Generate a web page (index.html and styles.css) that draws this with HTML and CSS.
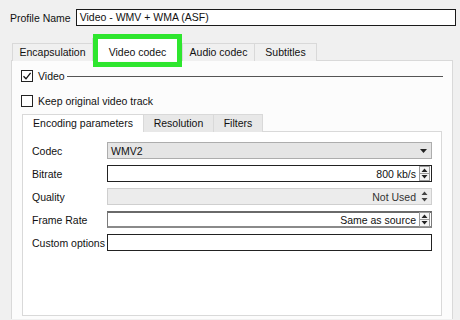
FILE: index.html
```html
<!DOCTYPE html>
<html lang="en">
<head>
    <meta charset="UTF-8">
    <meta name="viewport" content="width=device-width, initial-scale=1.0">
    <title>Video codec</title>
    <link rel="stylesheet" href="styles.css">
</head>
<body>
    <!-- Profile name -->
    <div class="profile">
        <span class="profile-label">Profile Name</span>
        <div class="profile-input">Video - WMV + WMA (ASF)</div>
    </div>

    <!-- Outer tabs -->
    <div class="tabs outer-tabs">
        <div class="tab">Encapsulation</div>
        <div class="tab active highlighted">Video codec</div>
        <div class="tab">Audio codec</div>
        <div class="tab">Subtitles</div>
    </div>

    <div class="panel">
        <div class="check-row">
            <span class="checkbox">
                <svg width="10" height="10" viewBox="0 0 10 10"><path d="M1.5 5.2 L4 7.8 L8.6 1.8" fill="none" stroke="#111" stroke-width="1.3"/></svg>
            </span>
            <span>Video</span>
            <span class="rule"></span>
        </div>
        <div class="check-row second">
            <span class="checkbox"></span>
            <span>Keep original video track</span>
        </div>

        <!-- Inner tabs -->
        <div class="tabs inner-tabs">
            <div class="tab active">Encoding parameters</div>
            <div class="tab">Resolution</div>
            <div class="tab">Filters</div>
        </div>

        <div class="inner-panel">
            <div class="form-row">
                <span class="form-label">Codec</span>
                <div class="field combo">
                    <span class="value-left">WMV2</span>
                    <svg class="arrow" width="7" height="4" viewBox="0 0 7 4"><path d="M0 0 H7 L3.5 4 Z" fill="#222"/></svg>
                </div>
            </div>
            <div class="form-row">
                <span class="form-label">Bitrate</span>
                <div class="field edit strong">
                    <span class="value-right">800 kb/s</span>
                    <span class="spin">
                        <svg width="11" height="15" viewBox="0 0 11 15"><rect x="0.5" y="0.5" width="10" height="14" fill="#f4f4f4" stroke="#9a9a9a"/><line x1="1" y1="7.5" x2="10" y2="7.5" stroke="#9a9a9a"/><path d="M2.5 6 L5.5 2.5 L8.5 6 Z M2.5 9 L5.5 12.5 L8.5 9 Z" fill="#222"/></svg>
                    </span>
                </div>
            </div>
            <div class="form-row">
                <span class="form-label">Quality</span>
                <div class="field disabled">
                    <span class="value-right">Not Used</span>
                    <span class="spin">
                        <svg width="11" height="15" viewBox="0 0 11 15"><path d="M2.5 6 L5.5 2.5 L8.5 6 Z M2.5 9 L5.5 12.5 L8.5 9 Z" fill="#444"/></svg>
                    </span>
                </div>
            </div>
            <div class="form-row">
                <span class="form-label">Frame Rate</span>
                <div class="field edit framed">
                    <span class="value-right">Same as source</span>
                    <span class="spin">
                        <svg width="11" height="15" viewBox="0 0 11 15"><rect x="0.5" y="0.5" width="10" height="14" fill="#f4f4f4" stroke="#9a9a9a"/><line x1="1" y1="7.5" x2="10" y2="7.5" stroke="#9a9a9a"/><path d="M2.5 6 L5.5 2.5 L8.5 6 Z M2.5 9 L5.5 12.5 L8.5 9 Z" fill="#222"/></svg>
                    </span>
                </div>
            </div>
            <div class="form-row">
                <span class="form-label">Custom options</span>
                <div class="field edit strong"></div>
            </div>
        </div>
    </div>
</body>
</html>
```

FILE: styles.css
```css
body {
    font-family: "Liberation Sans", Arial, sans-serif;
    font-size: 10.5px;
    color: #111;
    background-color: #f0f0f0;
    margin: 0;
    padding: 9px 4px 0 10px;
    height: 320px;
    box-sizing: border-box;
    overflow: hidden;
}

/* Profile name row */
.profile {
    display: flex;
    align-items: center;
}
.profile-label {
    margin-right: 5px;
}
.profile-input {
    flex: 1;
    height: 17px;
    line-height: 15px;
    padding-left: 3px;
    border: 1px solid #1a1a1a;
    background-color: #fff;
    box-sizing: border-box;
}

/* Tabs */
.tabs {
    display: flex;
    align-items: flex-end;
    position: relative;
    z-index: 1;
}
.tab {
    height: 18px;
    line-height: 17px;
    text-align: center;
    border: 1px solid #d9d9d9;
    border-bottom: none;
    border-right: none;
    box-sizing: border-box;
    background-color: #f0f0f0;
}
.tab:last-child {
    border-right: 1px solid #d9d9d9;
}
.tab.active {
    background-color: #fff;
}
.outer-tabs {
    margin: 13px 0 0 2px;
    height: 22px;
}
.outer-tabs .tab:nth-child(1) { width: 80px; }
.outer-tabs .tab:nth-child(2) { width: 90px; }
.outer-tabs .tab:nth-child(3) { width: 72px; }
.outer-tabs .tab:nth-child(4) { width: 63px; }
.outer-tabs .tab.active {
    height: 23px;
    line-height: 26px;
    position: relative;
}
/* green highlight frame */
.highlighted::after {
    content: "";
    position: absolute;
    top: -5px;
    bottom: -6px;
    left: 0;
    right: 0;
    border: 5px solid #2ee62e;
}

/* Outer panel (runs past the bottom of the window) */
.panel {
    margin: -1px 3px 0 1px;
    padding: 9px 9px 0 9px;
    height: 259px;
    border: 1px solid #d9d9d9;
    border-bottom: none;
    background-color: #fcfcfc;
    box-sizing: border-box;
}
.check-row {
    display: flex;
    align-items: center;
    height: 12px;
}
.check-row.second {
    margin-top: 13px;
}
.checkbox {
    width: 12px;
    height: 12px;
    border: 1px solid #222;
    background-color: #fff;
    box-sizing: border-box;
    margin-right: 5px;
    display: flex;
    align-items: center;
    justify-content: center;
}
.rule {
    flex: 1;
    height: 1px;
    margin-left: 2px;
    background-color: #555;
}

/* Inner tabs and panel */
.inner-tabs {
    margin: 7px 0 0 1px;
}
.inner-tabs .tab:nth-child(1) { width: 121px; }
.inner-tabs .tab:nth-child(2) { width: 70px; }
.inner-tabs .tab:nth-child(3) { width: 50px; }
.inner-tabs .tab {
    background-color: #e8e8e8;
}
.inner-tabs .tab.active {
    background-color: #fff;
}
.inner-panel {
    margin: -1px 1px 0 1px;
    padding: 10px 9px 0 9px;
    height: 185px;
    border: 1px solid #d9d9d9;
    background-color: #fff;
    box-sizing: border-box;
    display: flex;
    flex-direction: column;
    gap: 6px;
}
.form-row {
    display: flex;
    align-items: center;
    height: 17px;
}
.form-label {
    width: 75px;
    flex-shrink: 0;
}
.field {
    flex: 1;
    height: 17px;
    display: flex;
    align-items: center;
    box-sizing: border-box;
    padding: 0 1px 0 3px;
}
.combo {
    background-color: #e5e5e5;
    border: 1px solid #adadad;
    padding-right: 4px;
}
.edit {
    background-color: #fff;
}
.strong {
    border: 1px solid #222;
}
.framed {
    border: 1px solid #7a7a7a;
    border-top: 2px solid #6a6a6a;
    border-bottom: 2px solid #8a8a8a;
}
.disabled {
    background-color: #ececec;
    border: 1px solid #cfcfcf;
    color: #333;
}
.value-left {
    flex: 1;
}
.value-right {
    flex: 1;
    text-align: right;
    margin-right: 3px;
}
.spin {
    display: flex;
    align-items: center;
}
.spin svg {
    display: block;
}
```
